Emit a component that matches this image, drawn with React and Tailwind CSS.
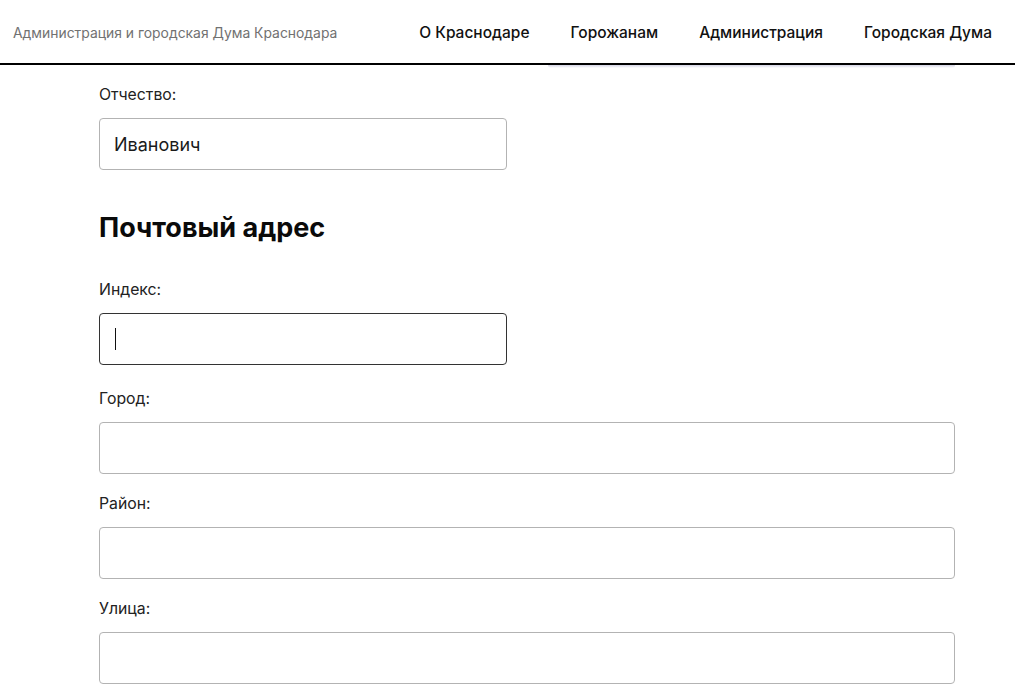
import React from "react";

const navItems = ["О Краснодаре", "Горожанам", "Администрация", "Городская Дума"];

const Field = ({label, value, focused, wide, className = ""}) => (
    <div className={"flex flex-col " + className}>
        <label className="text-[15.8px] leading-5 text-[#222]">{label}</label>
        <div
            className={
                "mt-[13px] h-[52px] flex items-center rounded-[4px] border bg-white px-[14px] " +
                (wide ? "w-[856px] " : "w-[408px] ") +
                (focused ? "border-[#333]" : "border-[#b3b3b3]")
            }
        >
            {value && <span className="text-[18px] text-[#1a1a1a]">{value}</span>}
            {focused && <span className="ml-[1px] h-[22px] w-px bg-[#111]"></span>}
        </div>
    </div>
);

export default function App() {
    return (
        <div className="min-h-[699px] bg-white font-['Inter','Liberation_Sans',sans-serif]">
            <header className="relative h-[65px] border-b-2 border-black flex items-center justify-between pl-[13px] pr-[23px]">
                <span className="text-[13.9px] text-[#717171] pt-[3px]">Администрация и городская Дума Краснодара</span>
                <nav className="flex items-center gap-[41px] pt-[3px]">
                    {navItems.map(item => (
                        <a key={item} href="#" className="text-[15.5px] font-medium text-[#111]">{item}</a>
                    ))}
                </nav>
                <div className="absolute left-[548px] top-[65px] h-[3px] w-[407px] rounded-b-md bg-gradient-to-b from-[#d4d4e4] to-transparent"></div>
            </header>

            <main className="pl-[99px] pt-[20px]">
                <Field label="Отчество:" value="Иванович"/>

                <h2 className="mt-[42px] text-[27px] leading-8 font-bold text-[#0a0a0a]">Почтовый адрес</h2>

                <Field label="Индекс:" focused className="mt-[36px]"/>
                <Field label="Город:" wide className="mt-[24px]"/>
                <Field label="Район:" wide className="mt-[20px]"/>
                <Field label="Улица:" wide className="mt-[20px]"/>
            </main>
        </div>
    );
}
